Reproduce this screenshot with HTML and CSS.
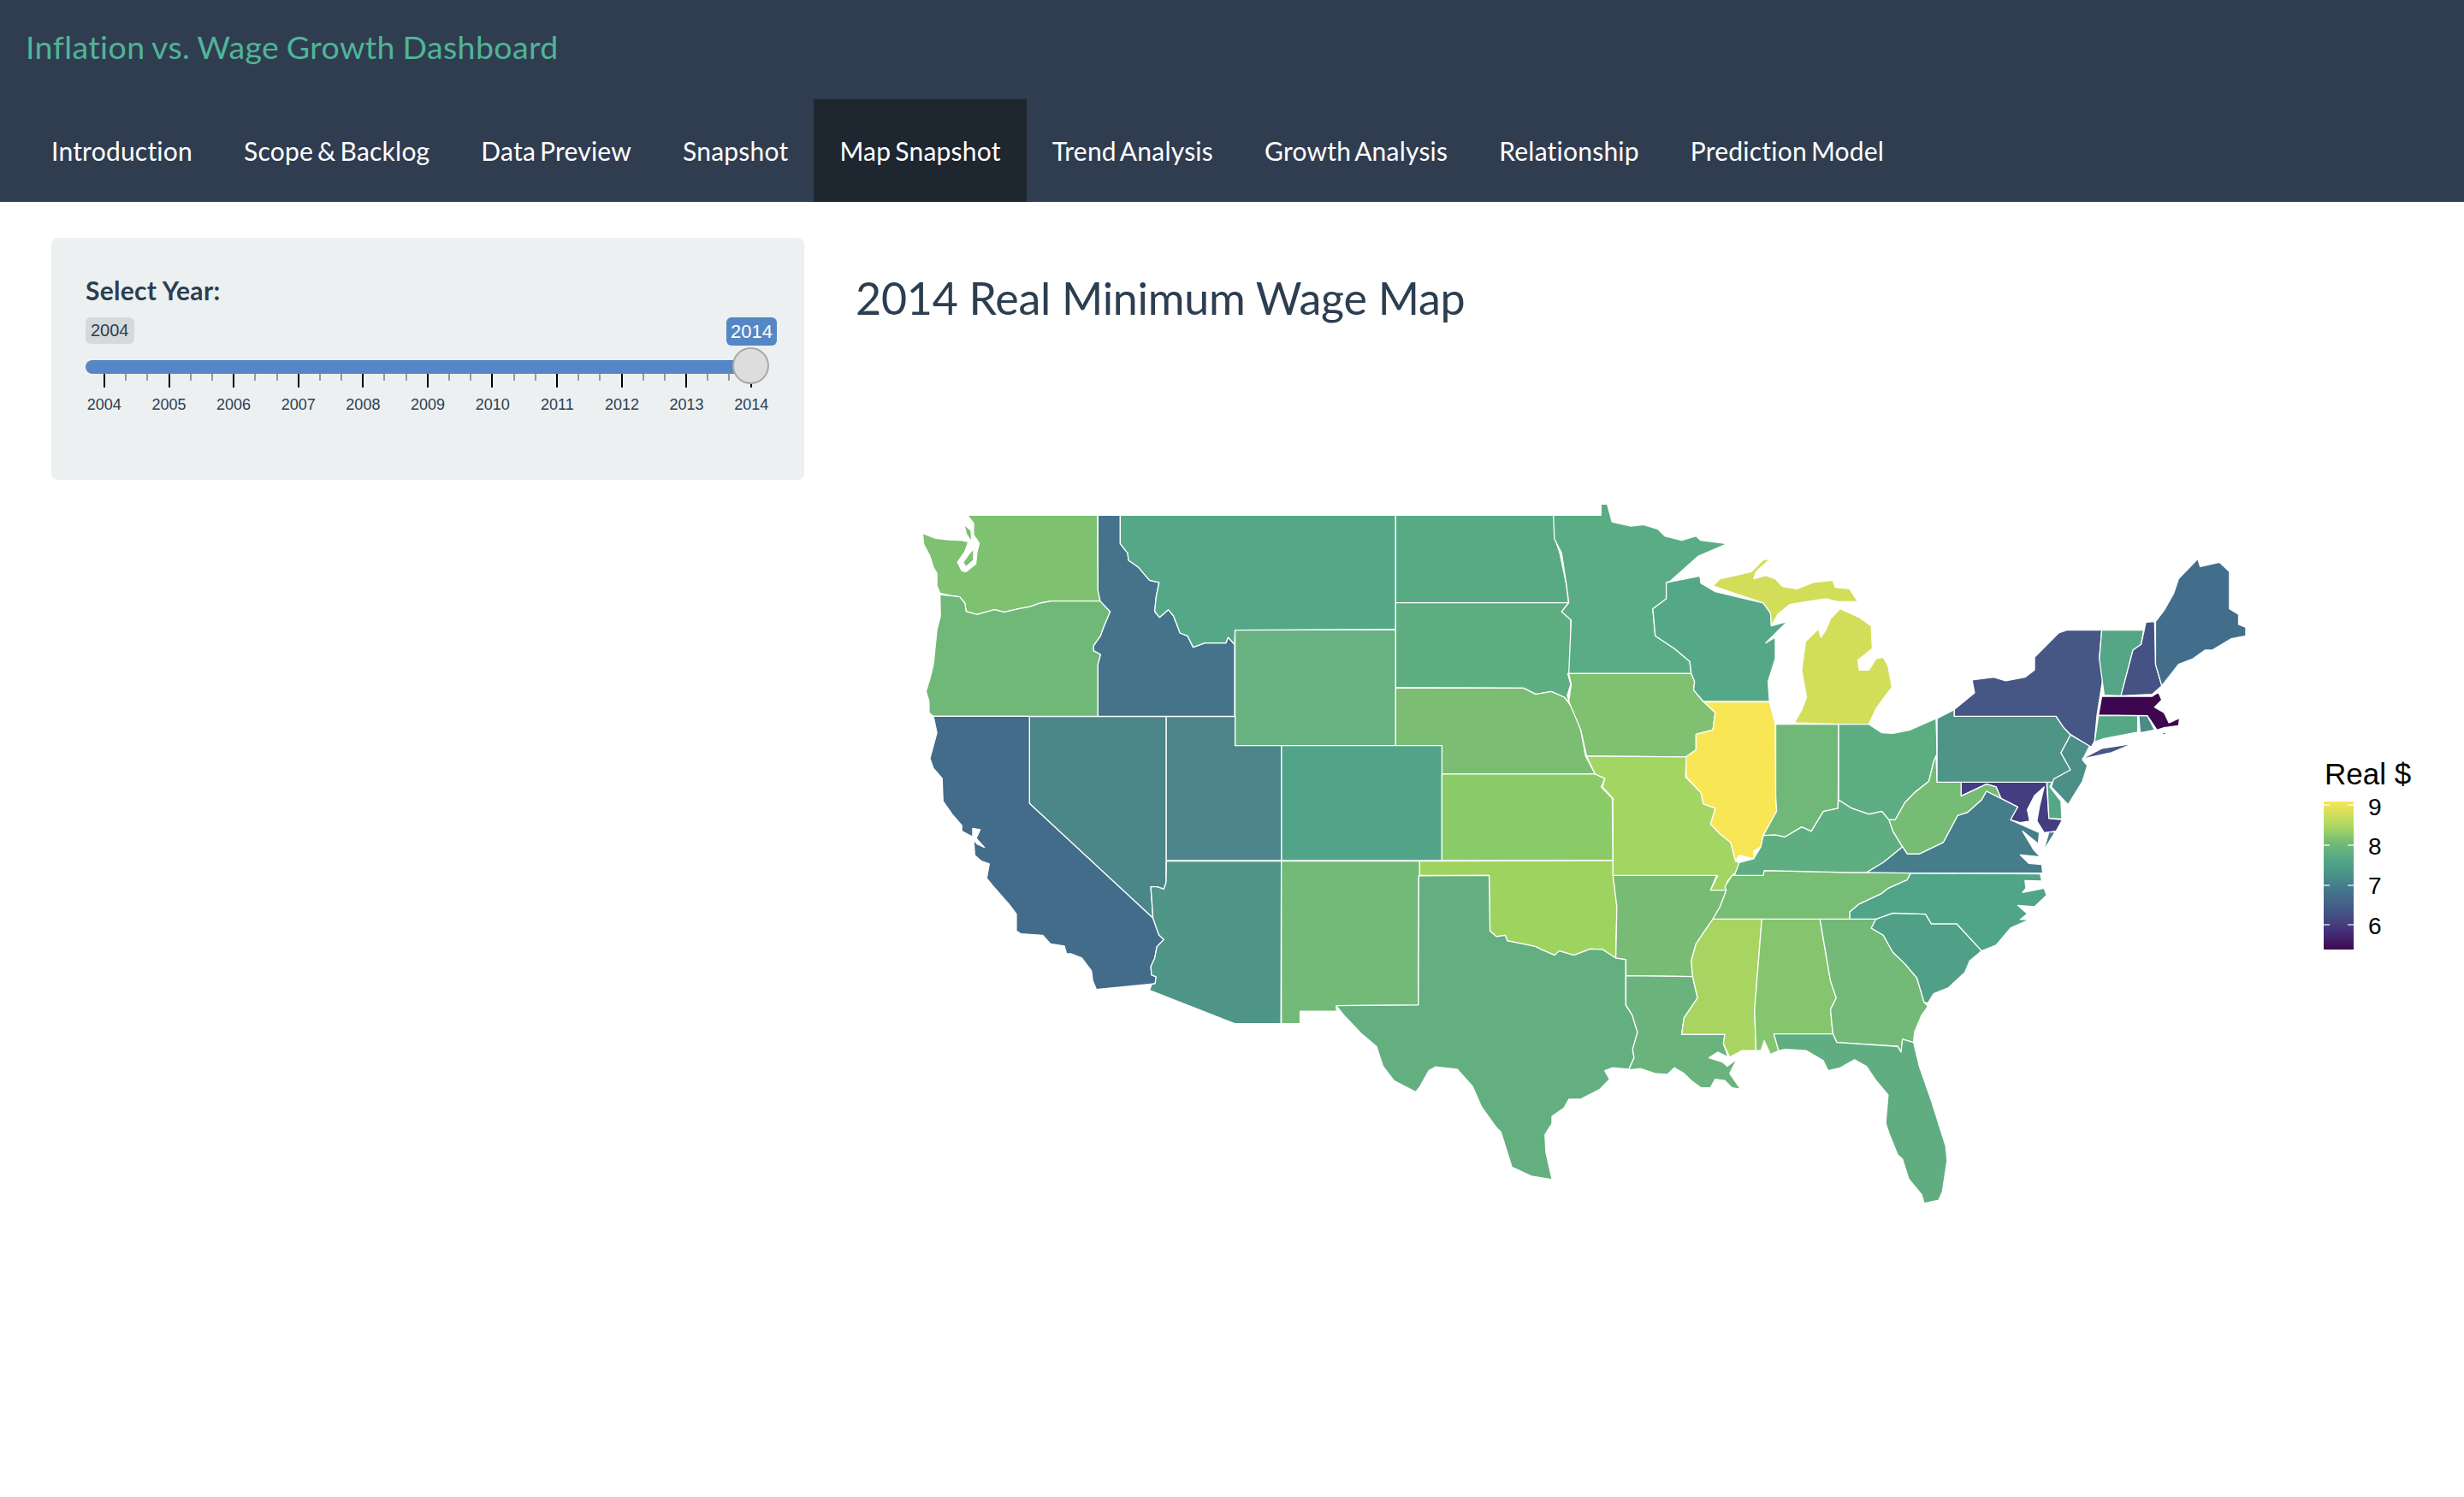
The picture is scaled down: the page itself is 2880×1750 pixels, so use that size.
FILE: index.html
```html
<!DOCTYPE html>
<html lang="en">
<head>
    <meta charset="UTF-8">
    <title>Inflation vs. Wage Growth Dashboard</title>
    <link rel="stylesheet" href="styles.css">
</head>
<body>
    <header class="navbar">
        <div class="brand">Inflation vs. Wage Growth Dashboard</div>
        <nav class="tabs">
            <a class="tab">Introduction</a>
            <a class="tab">Scope &amp; Backlog</a>
            <a class="tab">Data Preview</a>
            <a class="tab">Snapshot</a>
            <a class="tab active">Map Snapshot</a>
            <a class="tab">Trend Analysis</a>
            <a class="tab">Growth Analysis</a>
            <a class="tab">Relationship</a>
            <a class="tab">Prediction Model</a>
        </nav>
    </header>

    <div class="content">
        <aside class="panel">
            <label class="field-label">Select Year:</label>
            <div class="slider">
                <div class="tags">
                    <span class="tag-min">2004</span>
                    <span class="tag-max">2014</span>
                </div>
                <div class="track"><span class="handle"></span></div>
                <div class="ticks">
                    <i class="major"></i><i></i><i></i><i class="major"></i><i></i><i></i>
                    <i class="major"></i><i></i><i></i><i class="major"></i><i></i><i></i>
                    <i class="major"></i><i></i><i></i><i class="major"></i><i></i><i></i>
                    <i class="major"></i><i></i><i></i><i class="major"></i><i></i><i></i>
                    <i class="major"></i><i></i><i></i><i class="major"></i><i></i><i></i>
                    <i class="major"></i>
                </div>
                <div class="years">
                    <span>2004</span><span>2005</span><span>2006</span><span>2007</span>
                    <span>2008</span><span>2009</span><span>2010</span><span>2011</span>
                    <span>2012</span><span>2013</span><span>2014</span>
                </div>
            </div>
        </aside>

        <main class="main">
            <h2 class="title">2014 Real Minimum Wage Map</h2>
            <svg class="map" width="1880" height="960" viewBox="1000 500 1880 960">
                <defs>
                    <linearGradient id="viridis" x1="0" y1="1" x2="0" y2="0">
                        <stop offset="0" stop-color="#3d0a50"/>
                        <stop offset="0.13" stop-color="#44317a"/>
                        <stop offset="0.27" stop-color="#445a86"/>
                        <stop offset="0.4" stop-color="#44758b"/>
                        <stop offset="0.52" stop-color="#4b9589"/>
                        <stop offset="0.62" stop-color="#55a986"/>
                        <stop offset="0.72" stop-color="#72bb75"/>
                        <stop offset="0.82" stop-color="#a5d564"/>
                        <stop offset="1" stop-color="#f8e655"/>
                    </linearGradient>
                </defs>

                <!-- west half, points read off at 1.96 x 3 -->
                <g transform="translate(1040 570) scale(0.5102 0.3333)">
                    <polygon fill="#7dc171" points="178,97 476,97 477,360 482,398 370,398 345,405 320,418 295,425 262,437 240,428 200,445 175,435 172,405 160,383 143,380 115,370 108,345 108,300 100,280 92,240 78,200 75,160 105,178 135,183 163,185 180,190 172,225 155,262 165,292 175,295 197,268 200,225 205,195 192,165 192,125"/>
                    <polygon fill="#7dc171" points="170,130 186,150 188,190 176,165"/>
                    <polygon fill="#7dc171" points="182,232 192,215 192,255 174,278 168,262"/>
                    <polygon fill="#70b878" points="115,375 143,380 160,383 172,405 175,435 200,445 240,428 262,437 295,425 320,418 345,405 370,398 482,398 505,435 490,490 483,520 467,555 467,572 483,585 477,620 477,802 100,802 90,790 90,750 83,715 92,670 100,620 108,500 116,450"/>
                    <polygon fill="#44738b" points="477,97 528,97 528,197 545,230 547,255 570,280 595,325 617,333 610,385 607,435 618,455 638,428 650,450 665,510 682,520 695,560 722,545 770,545 775,525 790,550 790,802 477,802 477,620 483,585 467,572 467,555 483,520 490,490 505,435 482,398 477,360"/>
                    <polygon fill="#54a887" points="528,97 1159,97 1159,498 791,500 790,550 775,525 770,545 722,545 695,560 682,520 665,510 650,450 638,428 618,455 607,435 610,385 617,333 595,325 570,280 547,255 545,230 528,197"/>
                    <polygon fill="#68b180" points="791,500 1159,498 1159,905 791,905"/>
                    <polygon fill="#58aa85" points="1159,97 1520,97 1527,130 1525,185 1535,230 1550,340 1555,404 1159,404"/>
                    <polygon fill="#5eae82" points="1159,404 1555,404 1540,435 1560,462 1561,650 1553,652 1560,690 1552,730 1558,755 1545,735 1515,715 1480,725 1452,703 1159,702"/>
                    <polygon fill="#7abd73" points="1159,702 1452,703 1480,725 1515,715 1545,735 1565,775 1583,850 1594,942 1616,1005 1265,1005 1265,905 1159,905"/>
                    <polygon fill="#51a488" points="897,905 1265,905 1265,1308 897,1308"/>
                    <polygon fill="#4c8489" points="633,803 791,803 791,905 897,905 897,1308 633,1308"/>
                    <polygon fill="#4b8789" points="320,803 633,803 633,1385 628,1408 612,1400 598,1400 600,1440 603,1510 320,1108"/>
                    <polygon fill="#436b8a" points="100,802 320,802 320,1108 603,1510 612,1550 617,1570 628,1585 612,1610 607,1650 598,1680 600,1710 610,1715 608,1740 473,1760 465,1730 462,1695 440,1650 415,1635 405,1635 400,1608 368,1600 350,1570 300,1565 290,1555 290,1495 275,1465 235,1395 222,1370 228,1320 210,1310 195,1290 192,1235 200,1250 217,1262 198,1230 207,1200 190,1195 190,1225 165,1205 165,1185 145,1150 122,1100 120,1020 100,985 92,950 108,860"/>
                    <polygon fill="#4f9588" points="634,1310 897,1310 896,1880 790,1880 595,1763 600,1742 608,1740 610,1715 600,1710 598,1680 607,1650 612,1610 628,1585 617,1570 612,1550 603,1510 600,1440 598,1400 612,1400 628,1408 633,1385"/>
                    <polygon fill="#73b978" points="897,1310 1214,1310 1214,1360 1212,1362 1211,1815 1023,1817 1023,1830 1030,1837 940,1837 940,1880 897,1880"/>
                    <polygon fill="#8bcb67" points="1265,1005 1616,1005 1638,1020 1630,1050 1655,1090 1657,1308 1265,1308"/>
                    <polygon fill="#9fd360" points="1214,1310 1657,1308 1657,1360 1666,1470 1663,1650 1633,1620 1605,1618 1567,1640 1534,1625 1523,1640 1490,1618 1480,1610 1450,1600 1415,1590 1410,1570 1390,1575 1375,1555 1373,1360 1214,1360"/>
                    <polygon fill="#64af80" points="1212,1362 1373,1360 1375,1555 1390,1575 1410,1570 1415,1590 1450,1600 1480,1610 1490,1618 1523,1640 1534,1625 1567,1640 1605,1618 1633,1620 1663,1650 1686,1655 1686,1815 1701,1850 1713,1910 1702,1970 1705,2000 1693,2040 1655,2035 1638,2045 1649,2075 1627,2110 1583,2145 1556,2145 1545,2175 1517,2205 1517,2230 1501,2270 1503,2330 1517,2425 1520,2428 1470,2415 1425,2383 1400,2260 1390,2245 1355,2170 1335,2100 1300,2040 1250,2032 1235,2045 1215,2100 1205,2120 1155,2080 1130,2030 1115,1960 1080,1915 1040,1850 1023,1817 1211,1815"/>
                </g>

                <!-- east half, points read off at 1.782 x 3 -->
                <g transform="translate(1800 570) scale(0.5612 0.3333)">
                    <polygon fill="#5aac84" points="28,97 127,97 127,58 140,58 150,120 190,135 215,130 245,145 260,170 295,185 325,170 335,185 390,197 330,240 270,330 263,333 263,390 235,425 240,520 280,565 312,610 315,652 60,652 65,465 45,435 60,404 55,340 45,230 30,180"/>
                    <polygon fill="#7fc170" points="60,652 315,652 322,680 320,710 340,750 365,790 360,850 325,865 325,920 305,945 97,942 85,850 70,790 60,750 65,690"/>
                    <polygon fill="#54a887" points="263,333 333,310 335,335 365,365 465,405 480,440 482,485 515,470 470,545 490,525 490,600 475,680 478,750 340,750 320,710 322,680 315,652 312,610 280,565 240,520 235,425 263,390"/>
                    <polygon fill="#f8e655" points="342,752 478,752 490,830 491,1085 493,1135 465,1220 460,1260 445,1275 445,1302 415,1290 407,1310 397,1245 375,1215 355,1180 365,1125 340,1110 335,1070 305,1015 303,945 325,920 325,865 360,850 365,790"/>
                    <polygon fill="#d2de5a" points="530,825 545,780 555,735 545,640 553,540 580,495 585,525 595,500 605,460 625,425 665,455 690,485 692,565 662,605 665,640 685,640 700,600 715,595 725,625 733,700 715,740 700,775 685,830 622,830"/>
                    <polygon fill="#d2de5a" points="360,345 375,320 440,295 465,253 480,250 450,295 445,320 470,308 490,320 505,347 535,355 570,332 610,325 615,350 645,355 662,400 620,400 595,390 555,400 520,410 495,445 482,485 480,440 465,405"/>
                    <polygon fill="#a3d562" points="97,942 305,945 303,1015 335,1070 340,1110 365,1125 355,1180 375,1215 397,1245 407,1310 415,1315 410,1345 390,1380 388,1412 355,1412 370,1362 152,1360 152,1090 130,1050 135,1020 115,1005"/>
                    <polygon fill="#78bb74" points="152,1360 368,1360 355,1412 388,1412 375,1470 360,1515 345,1550 325,1600 315,1660 318,1715 179,1712 179,1655 158,1650 160,1470"/>
                    <polygon fill="#6ab37c" points="179,1712 318,1715 328,1790 300,1860 295,1918 385,1918 382,1950 392,1998 370,1980 352,2000 380,2015 390,2030 410,2005 395,2055 418,2110 400,2105 385,2080 365,2075 355,2105 335,2105 315,2080 300,2055 280,2035 265,2058 240,2055 210,2038 185,2042 196,2000 193,1970 203,1910 192,1850 179,1815"/>
                    <polygon fill="#a8d562" points="360,1513 462,1513 447,1830 450,1975 420,1975 395,1998 382,1950 385,1918 295,1918 300,1860 328,1790 318,1715 315,1660 325,1600 345,1550"/>
                    <polygon fill="#84c56e" points="462,1513 583,1513 605,1730 617,1790 605,1830 610,1916 487,1916 497,1975 480,1988 467,1940 460,1975 450,1975 447,1830"/>
                    <polygon fill="#73ba78" points="583,1513 700,1513 690,1545 715,1570 735,1630 760,1670 785,1720 800,1805 808,1820 795,1850 780,1910 778,1946 755,1935 752,1980 745,1960 618,1946 610,1916 605,1830 617,1790 605,1730"/>
                    <polygon fill="#60ad81" points="487,1916 610,1916 618,1946 745,1960 752,1980 755,1935 778,1946 790,2030 815,2150 845,2310 848,2360 838,2470 830,2500 800,2510 795,2480 768,2425 755,2355 745,2340 728,2270 720,2230 725,2130 700,2080 680,2030 655,2007 625,2035 600,2045 590,2010 555,1975 510,1970 497,1975"/>
                    <polygon fill="#4fa087" points="690,1545 700,1513 735,1492 803,1496 815,1530 868,1530 920,1625 895,1660 885,1700 850,1755 820,1775 808,1808 800,1805 785,1720 760,1670 735,1630 715,1570"/>
                    <polygon fill="#50a488" points="645,1513 645,1488 665,1460 710,1425 725,1405 765,1375 772,1352 1042,1355 1045,1380 1010,1378 1012,1405 1005,1420 1050,1405 1055,1430 1030,1470 995,1465 1015,1495 1000,1515 1020,1515 980,1545 950,1605 920,1625 868,1530 815,1530 803,1496 735,1492 700,1513"/>
                    <polygon fill="#78bd74" points="400,1360 465,1358 467,1343 640,1350 772,1350 765,1375 725,1405 710,1425 665,1460 645,1488 645,1513 360,1513 375,1470 388,1412 385,1400"/>
                    <polygon fill="#5fae82" points="445,1302 460,1260 465,1220 490,1218 510,1225 545,1190 565,1205 590,1135 620,1125 622,1095 650,1125 685,1145 712,1135 727,1165 735,1205 755,1260 715,1315 680,1350 640,1350 467,1343 465,1360 405,1360 415,1315"/>
                    <polygon fill="#70b878" points="491,830 622,830 621,1095 620,1125 590,1135 565,1205 545,1190 510,1225 490,1218 465,1220 493,1135 491,1085"/>
                    <polygon fill="#5dad83" points="622,830 685,830 712,860 735,862 770,850 825,810 827,940 820,960 810,1030 780,1070 760,1105 740,1165 727,1165 712,1135 685,1145 650,1125 622,1095"/>
                    <polygon fill="#443d80" points="877,1033 1055,1033 1060,1160 1088,1165 1075,1205 1050,1210 1035,1170 1040,1120 1050,1050 1030,1080 1015,1130 1020,1170 1000,1175 980,1165 995,1120 960,1090 950,1050 930,1040 877,1082"/>
                    <polygon fill="#77bc74" points="825,940 827,1033 877,1033 877,1082 930,1040 950,1050 960,1090 930,1065 920,1095 890,1140 870,1150 840,1245 790,1285 765,1285 755,1260 735,1205 727,1165 740,1165 760,1105 780,1070 810,1030 820,960"/>
                    <polygon fill="#457d8b" points="680,1350 715,1315 755,1260 765,1285 790,1285 840,1245 870,1150 890,1140 920,1095 930,1065 960,1090 995,1120 980,1165 1000,1180 1020,1195 1040,1210 1038,1250 1005,1205 1028,1270 1042,1295 1000,1288 1018,1318 1045,1322 1047,1352 772,1352"/>
                    <polygon fill="#457d8b" points="1060,1208 1073,1208 1050,1270 1045,1295"/>
                    <polygon fill="#54a787" points="1056,1033 1070,1022 1062,1050 1085,1100 1087,1162 1060,1160"/>
                    <polygon fill="#4e9588" points="827,810 863,778 863,802 1075,802 1090,840 1105,868 1085,930 1105,990 1070,1033 827,1033"/>
                    <polygon fill="#4c8f89" points="1105,868 1145,905 1130,955 1140,975 1130,1030 1100,1112 1065,1050 1070,1022 1105,990 1085,930"/>
                    <polygon fill="#465785" points="1097,500 1170,500 1165,600 1175,640 1160,800 1155,890 1148,910 1105,866 1090,840 1075,802 863,802 863,778 905,720 900,675 945,665 970,678 1010,665 1030,640 1030,595 1080,510"/>
                    <polygon fill="#465785" points="1130,950 1170,915 1235,898 1190,930 1140,948"/>
                    <polygon fill="#54a686" points="1170,500 1257,500 1252,550 1235,570 1210,730 1175,728 1165,600"/>
                    <polygon fill="#445383" points="1262,472 1280,470 1282,620 1295,695 1275,725 1210,730 1235,570 1252,550"/>
                    <polygon fill="#436e8b" points="1282,470 1300,430 1320,370 1330,320 1370,250 1375,277 1415,262 1436,295 1436,425 1455,445 1455,480 1470,490 1470,520 1440,530 1400,570 1385,570 1360,600 1330,620 1295,695 1282,620"/>
                    <polygon fill="#56a885" points="1163,800 1245,800 1245,858 1175,880 1155,892"/>
                    <polygon fill="#4a8b88" points="1247,800 1265,800 1280,850 1250,860"/>
                    <polygon fill="#3d074f" points="1170,732 1275,732 1288,718 1295,745 1280,770 1300,790 1310,825 1330,810 1322,795 1332,810 1330,835 1300,842 1285,850 1265,800 1163,798"/>
                    <polygon fill="#3d074f" points="1295,865 1305,865 1300,855"/>
                </g>

                <text class="legend-title" x="2717" y="917">Real $</text>
                <rect x="2716" y="937" width="35" height="173" fill="url(#viridis)"/>
                <path class="legend-ticks" d="M2716 941h7M2744 941h7M2716 988h7M2744 988h7M2716 1035h7M2744 1035h7M2716 1081h7M2744 1081h7"/>
                <text class="legend-label" x="2768" y="953">9</text>
                <text class="legend-label" x="2768" y="999">8</text>
                <text class="legend-label" x="2768" y="1045">7</text>
                <text class="legend-label" x="2768" y="1092">6</text>
            </svg>
        </main>
    </div>
</body>
</html>
```

FILE: styles.css
```css
body {
    margin: 0;
    background: #ffffff;
    color: #2c3e50;
    font-family: "Lato", "Liberation Sans", sans-serif;
}

.navbar {
    height: 236px;
    background: #303d50;
}
.brand {
    height: 116px;
    padding-left: 30px;
    box-sizing: border-box;
    line-height: 110px;
    font-size: 37.5px;
    letter-spacing: 0.4px;
    word-spacing: -1.5px;
    color: #4fb598;
}
.tabs {
    display: flex;
    padding-left: 30px;
}
.tab {
    height: 120px;
    line-height: 120px;
    padding: 0 30px;
    font-size: 30px;
    letter-spacing: 0.22px;
    word-spacing: -2.9px;
    color: #ffffff;
}
.tab.active {
    background: #1e2630;
}

.content {
    display: flex;
    gap: 60px;
    padding: 42px 0 0 60px;
}
.panel {
    width: 880px;
    height: 283px;
    box-sizing: border-box;
    flex: none;
    padding: 40px;
    background: #ecf0f1;
    border-radius: 8px;
}
.field-label {
    display: block;
    height: 53px;
    line-height: 42px;
    font-size: 30px;
    font-weight: 700;
    letter-spacing: 0.3px;
    color: #2c3e50;
}

.slider {
    font-family: "Liberation Sans", sans-serif;
}
.tags {
    display: flex;
    justify-content: space-between;
    align-items: flex-start;
    height: 50px;
}
.tag-min {
    padding: 0 6px;
    height: 31px;
    line-height: 31px;
    font-size: 20px;
    background: #d6d9da;
    border-radius: 6px;
}
.tag-max {
    margin-right: -8px;
    padding: 0 5px;
    height: 33px;
    line-height: 33px;
    font-size: 22px;
    color: #ffffff;
    background: #5587c6;
    border-radius: 6px;
}
.track {
    position: relative;
    width: 770px;
    height: 16px;
    background: #5587c6;
    border-radius: 8px 0 0 8px;
}
.handle {
    position: absolute;
    left: 756px;
    top: -15px;
    width: 43px;
    height: 43px;
    box-sizing: border-box;
    background: #dddddd;
    border: 2px solid #aaaaaa;
    border-radius: 50%;
}
.ticks {
    display: flex;
    justify-content: space-between;
    align-items: flex-start;
    width: 758px;
    margin-left: 21px;
}
.ticks i {
    width: 2px;
    height: 8px;
    background: #999999;
}
.ticks i.major {
    height: 16px;
    background: #000000;
}
.years {
    display: flex;
    width: 832px;
    margin: 9px 0 0 -16px;
    font-size: 18px;
    line-height: 22px;
}
.years span {
    flex: 1;
    text-align: center;
}

.main {
    flex: 1;
}
.title {
    margin: 38px 0 119px;
    font-size: 52px;
    line-height: 65px;
    font-weight: 400;
    letter-spacing: -0.27px;
    color: #2c3e50;
}
.map {
    display: block;
}
.map polygon {
    stroke: #ffffff;
    stroke-width: 1.3;
    stroke-linejoin: round;
    vector-effect: non-scaling-stroke;
}
.legend-title {
    font-family: "Liberation Sans", sans-serif;
    font-size: 35px;
    fill: #000000;
}
.legend-label {
    font-family: "Liberation Sans", sans-serif;
    font-size: 28px;
    fill: #000000;
}
.legend-ticks {
    stroke: #ffffff;
    stroke-width: 1.5;
    fill: none;
    opacity: 0.8;
}
```
